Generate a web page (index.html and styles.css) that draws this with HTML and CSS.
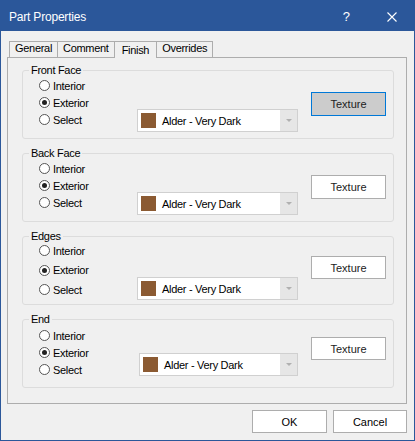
FILE: index.html
```html
<!DOCTYPE html>
<html>
<head>
<meta charset="utf-8">
<link rel="stylesheet" href="styles.css">
</head>
<body>
<div class="window">
  <div class="titlebar">
    <span class="title">Part Properties</span>
    <span class="help">?</span>
    <span class="close"><svg width="10" height="10" viewBox="0 0 10 10"><path d="M0.5 0.5L9.5 9.5M9.5 0.5L0.5 9.5" stroke="#fff" stroke-width="1.1" fill="none"/></svg></span>
  </div>
  <div class="body">
    <div class="tabs">
      <div class="tab">General</div>
      <div class="tab">Comment</div>
      <div class="tab active">Finish</div>
      <div class="tab">Overrides</div>
    </div>
    <div class="panel">
      <div class="group">
        <div class="group-label">Front Face</div>
        <div class="radios">
          <div class="radio"><span class="circle"></span>Interior</div>
          <div class="radio"><span class="circle checked"></span>Exterior</div>
          <div class="radio"><span class="circle"></span>Select</div>
        </div>
        <div class="combo"><span class="swatch"></span><span class="combo-text">Alder - Very Dark</span><span class="drop"><span class="tri"></span></span></div>
        <div class="btn texture focused">Texture</div>
      </div>
      <div class="group">
        <div class="group-label">Back Face</div>
        <div class="radios">
          <div class="radio"><span class="circle"></span>Interior</div>
          <div class="radio"><span class="circle checked"></span>Exterior</div>
          <div class="radio"><span class="circle"></span>Select</div>
        </div>
        <div class="combo"><span class="swatch"></span><span class="combo-text">Alder - Very Dark</span><span class="drop"><span class="tri"></span></span></div>
        <div class="btn texture">Texture</div>
      </div>
      <div class="group group-edges">
        <div class="group-label">Edges</div>
        <div class="radios">
          <div class="radio"><span class="circle"></span>Interior</div>
          <div class="radio"><span class="circle checked"></span>Exterior</div>
          <div class="radio"><span class="circle"></span>Select</div>
        </div>
        <div class="combo"><span class="swatch"></span><span class="combo-text">Alder - Very Dark</span><span class="drop"><span class="tri"></span></span></div>
        <div class="btn texture">Texture</div>
      </div>
      <div class="group group-end">
        <div class="group-label">End</div>
        <div class="radios">
          <div class="radio"><span class="circle"></span>Interior</div>
          <div class="radio"><span class="circle checked"></span>Exterior</div>
          <div class="radio"><span class="circle"></span>Select</div>
        </div>
        <div class="combo"><span class="swatch"></span><span class="combo-text">Alder - Very Dark</span><span class="drop"><span class="tri"></span></span></div>
        <div class="btn texture">Texture</div>
      </div>
    </div>
    <div class="buttons">
      <div class="btn ok">OK</div>
      <div class="btn cancel">Cancel</div>
    </div>
  </div>
</div>
</body>
</html>
```
FILE: styles.css
```css
html, body {
  margin: 0;
  padding: 0;
  background: #f0f0f0;
}
.window {
  width: 415px;
  height: 441px;
  box-sizing: border-box;
  border: 1px solid #2b579a;
  background: #f0f0f0;
  font-family: "Liberation Sans", Arial, sans-serif;
  font-size: 11px;
  letter-spacing: -0.3px;
  color: #000;
  overflow: hidden;
}
.titlebar {
  height: 30px;
  background: #2b579a;
  color: #fff;
  display: flex;
  align-items: center;
  padding-top: 1px;
  box-sizing: border-box;
}
.title {
  flex: 1;
  padding-left: 8px;
  font-size: 12px;
  letter-spacing: -0.2px;
}
.help {
  font-size: 13px;
  letter-spacing: 0;
  margin-right: 37px;
}
.close {
  display: flex;
  margin-right: 17px;
}
.body {
  padding: 10px 7px 0 6px;
}
.tabs {
  display: flex;
  height: 16px;
  margin-left: 2px;
}
.tab {
  height: 16px;
  box-sizing: border-box;
  border: 1px solid #adadad;
  border-bottom: none;
  padding: 0 5px;
  line-height: 12px;
  background: #f0f0f0;
  margin-right: -1px;
}
.tab.active {
  height: 17px;
  padding: 2px 7px 0 7px;
  position: relative;
  z-index: 1;
}
.panel {
  height: 347px;
  box-sizing: border-box;
  border: 1px solid #adadad;
  padding: 12px 0 0 14px;
}
.group {
  position: relative;
  width: 372px;
  height: 69px;
  box-sizing: border-box;
  border: 1px solid #dcdcdc;
  border-radius: 3px;
  margin-bottom: 14px;
  display: flex;
  align-items: flex-start;
  padding-left: 16px;
}
.group-label {
  position: absolute;
  top: -7px;
  left: 6px;
  padding: 0 2px;
  line-height: 13px;
  background: #f0f0f0;
}
.radios {
  width: 98px;
  margin-top: 6px;
}
.radio {
  height: 17px;
  display: flex;
  align-items: center;
}
.circle {
  width: 11px;
  height: 11px;
  box-sizing: border-box;
  border: 1px solid #555;
  border-radius: 50%;
  background: #fff;
  margin-right: 3px;
  display: flex;
  align-items: center;
  justify-content: center;
}
.circle.checked::after {
  content: "";
  width: 5px;
  height: 5px;
  border-radius: 50%;
  background: #222;
}
.combo {
  width: 161px;
  height: 23px;
  box-sizing: border-box;
  border: 1px solid #d0d0d0;
  background: #fff;
  margin-top: 38px;
  display: flex;
  align-items: center;
  padding-left: 3px;
}
.swatch {
  width: 15px;
  height: 15px;
  background: #8b5a32;
}
.combo-text {
  flex: 1;
  margin-left: 6px;
}
.drop {
  width: 17px;
  align-self: stretch;
  background: #e6e6e6;
  display: flex;
  align-items: center;
  justify-content: center;
}
.tri {
  width: 0;
  height: 0;
  border-left: 3px solid transparent;
  border-right: 3px solid transparent;
  border-top: 3px solid #b0b0b0;
}
.btn {
  box-sizing: border-box;
  border: 1px solid #adadad;
  background: #fff;
  display: flex;
  align-items: center;
  justify-content: center;
  letter-spacing: 0;
  font-size: 11px;
}
.texture {
  width: 75px;
  height: 24px;
  margin-left: 13px;
  margin-top: 21px;
  color: #222;
}
.texture.focused {
  background: #cccccc;
  border-color: #0078d7;
}
.group-edges .radios {
  margin-top: 4px;
}
.group-edges .radio {
  height: 19.5px;
}
.group-edges .combo {
  margin-top: 40px;
}
.group-edges .texture {
  margin-top: 19px;
  height: 23px;
}
.group-end .radios {
  margin-top: 7px;
}
.group-end .combo {
  margin-top: 33px;
  margin-left: 2px;
  width: 159px;
}
.group-end .texture {
  margin-top: 17px;
  height: 23px;
}
.buttons {
  display: flex;
  justify-content: flex-end;
  gap: 6px;
  margin-top: 6px;
}
.ok {
  width: 75px;
  height: 23px;
}
.cancel {
  width: 74px;
  height: 23px;
}
```
